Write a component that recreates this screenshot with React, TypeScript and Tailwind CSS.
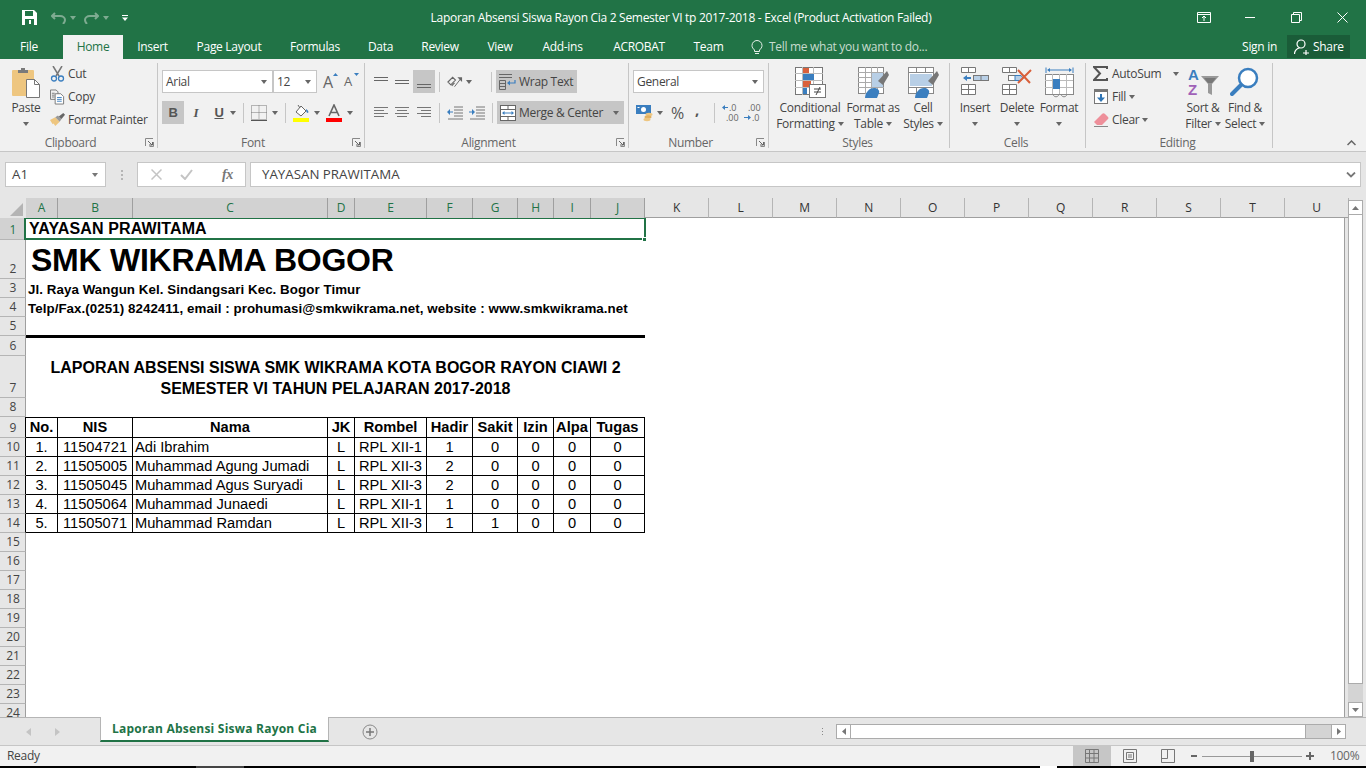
import type { ReactNode } from 'react'

const ui = "[font-family:'Open_Sans',sans-serif]"

function Caret({ className = 'border-t-[#666]' }: { className?: string }) {
  return <span className={`inline-block h-0 w-0 border-x-[3.5px] border-t-[4px] border-x-transparent ${className}`} />
}

function Launcher() {
  return (
    <svg width="9" height="9" viewBox="0 0 9 9" className="shrink-0">
      <path d="M0.5 8V0.5H8M8.5 4v4.5H4.5" fill="none" stroke="#888" />
      <path d="M3 3l4 4M4 7h3.5V4" fill="none" stroke="#666" />
    </svg>
  )
}

function Group({ width, label, launcher = false, children }: { width: string; label: string; launcher?: boolean; children: ReactNode }) {
  return (
    <div className={`${width} flex h-[85px] shrink-0 flex-col border-r border-[#c6c6c6]`}>
      <div className="h-[74px] shrink-0">{children}</div>
      <div className="flex h-[11px] items-center pr-[3px] text-[#666]">
        <span className={`flex-1 text-center leading-[16px] ${launcher ? 'pr-[4px]' : ''}`}>{label}</span>
        {launcher && <Launcher />}
      </div>
    </div>
  )
}

function LargeButton({ width, icon, line1, line2 }: { width: string; icon: ReactNode; line1: string; line2?: string }) {
  return (
    <div className={`${width} flex shrink-0 flex-col items-center pt-[4px] text-[#444]`}>
      <div className="h-[33px]">{icon}</div>
      <div className="whitespace-nowrap leading-[16px]">{line1}</div>
      <div className="flex h-[16px] items-center gap-[3px] whitespace-nowrap leading-[16px]">
        {line2}
        <Caret />
      </div>
    </div>
  )
}

function SmallRow({ icon, label, caret = false, gap = 'w-[15px]' }: { icon: ReactNode; label: string; caret?: boolean; gap?: string }) {
  return (
    <div className="flex h-[23px] items-center text-[#444]">
      <div className={`${gap} flex shrink-0 justify-center`}>{icon}</div>
      <span className="ml-[3px] whitespace-nowrap">{label}</span>
      {caret && <span className="ml-[3px] flex"><Caret /></span>}
    </div>
  )
}

function Lines({ rows }: { rows: [number, number][] }) {
  return (
    <svg width="16" height="16" viewBox="0 0 16 16">
      {rows.map(([x, w], i) => (
        <rect key={i} x={x} y={i * 3 + 2} width={w} height="1" fill="#777" />
      ))}
    </svg>
  )
}

function Valign({ pos }: { pos: 'top' | 'mid' | 'bot' }) {
  const y = pos === 'top' ? 3 : pos === 'mid' ? 6 : 10
  return (
    <svg width="16" height="16" viewBox="0 0 16 16">
      <rect x="1" y={y} width="14" height="1" fill="#666" />
      <rect x="1" y={y + 3} width="14" height="1" fill="#666" />
      {pos === 'bot' && <rect x="1" y={y + 6} width="14" height="1" fill="#666" />}
    </svg>
  )
}

function Indent({ flip = false }: { flip?: boolean }) {
  return (
    <svg width="16" height="14" viewBox="0 0 16 14">
      <path d="M7 1h9M7 4h9M7 7h9M7 10h9M1 13h15" stroke="#777" fill="none" />
      {flip ? <path d="M0 5.5h3V3l3 3-3 3V6.5H0z" fill="#3a7ebf" /> : <path d="M6 5.5H3V3L0 6l3 3V6.5h3z" fill="#3a7ebf" />}
    </svg>
  )
}

const PasteIcon = (
  <svg width="30" height="31" viewBox="0 0 30 31">
    <rect x="1" y="3" width="22" height="26" rx="1" fill="#eec680" />
    <path d="M7 6V3h3V1h4v2h3v3z" fill="#7a7a7a" />
    <path d="M15.5 12.5h8l5 5v13h-13z" fill="#fff" stroke="#777" />
    <path d="M23.5 12.5v5h5" fill="none" stroke="#777" />
  </svg>
)

const CutIcon = (
  <svg width="15" height="16" viewBox="0 0 15 16">
    <path d="M3 0l6 10M12 0L6 10" stroke="#777" strokeWidth="1.5" fill="none" />
    <circle cx="4" cy="12.5" r="2.5" fill="none" stroke="#3a7ebf" strokeWidth="1.3" />
    <circle cx="11" cy="12.5" r="2.5" fill="none" stroke="#3a7ebf" strokeWidth="1.3" />
  </svg>
)

const CopyIcon = (
  <svg width="16" height="16" viewBox="0 0 16 16">
    <path d="M.5.5h6l2 2v3M.5.5v10h5" fill="none" stroke="#777" />
    <path d="M2 4h3M2 6h3M2 8h3" stroke="#777" />
    <path d="M5.5 4.5h6l3 3v8h-9z" fill="#fff" stroke="#777" />
    <path d="M7.5 8.5h5M7.5 10.5h5M7.5 12.5h5" stroke="#3a7ebf" />
  </svg>
)

const PainterIcon = (
  <svg width="17" height="15" viewBox="0 0 17 15">
    <path d="M0 8l6-3 5 5-5 5-2-3-1 1z" fill="#eec680" />
    <path d="M6 5l3-2 4 4-2 3z" fill="#999" />
    <path d="M10 4l5-4 2 2-4 5z" fill="#666" />
  </svg>
)

function GrowA({ up }: { up: boolean }) {
  return (
    <div className="relative flex h-[23px] w-[15px] items-center">
      <span className={`leading-none text-[#666] ${up ? 'text-[16px]' : 'text-[13px]'}`}>A</span>
      <svg width="5" height="3" viewBox="0 0 5 3" className="absolute right-0 top-[3px]">
        <path d={up ? 'M0 3l2.5-3 2.5 3z' : 'M0 0l2.5 3 2.5-3z'} fill="#3a7ebf" />
      </svg>
    </div>
  )
}

const BorderIcon = (
  <svg width="16" height="16" viewBox="0 0 16 16">
    <path d="M.5.5h15v14H.5zM8 .5v14M.5 7.5h15" fill="none" stroke="#777" strokeDasharray="1 1" />
    <path d="M0 15.5h16" stroke="#555" />
  </svg>
)

const FillIcon = (
  <svg width="16" height="18" viewBox="0 0 16 18">
    <path d="M3 8l5-6 5 5-5 5z" fill="#fff" stroke="#666" />
    <path d="M5 1l2 3" stroke="#666" />
    <path d="M13 5c2 1 3 3 2 4-1 0-2-1-2-4z" fill="#3a7ebf" />
    <rect y="14" width="16" height="4" fill="#ffff00" />
  </svg>
)

const FontColorIcon = (
  <svg width="16" height="18" viewBox="0 0 16 18">
    <path d="M3 12L8 1l5 11M5 8.5h6" fill="none" stroke="#666" strokeWidth="1.6" />
    <rect y="14" width="16" height="4" fill="#ff0000" />
  </svg>
)

const OrientIcon = (
  <svg width="17" height="14" viewBox="0 0 17 14">
    <path d="M1 7l5-5 3 3-5 5zM5 11l3-3" fill="none" stroke="#666" strokeWidth="1.2" />
    <path d="M8 12L15 3" stroke="#666" />
    <path d="M11 2h5v5z" fill="#666" />
  </svg>
)

const WrapIcon = (
  <svg width="17" height="16" viewBox="0 0 17 16">
    <path d="M0 .5h13M0 3.5h13M.5 6.5h6v9h-6zM.5 9.5h6M.5 12.5h6" stroke="#666" fill="none" />
    <path d="M16 6v3h-6" stroke="#3a7ebf" fill="none" strokeWidth="1.2" />
    <path d="M8 9l3-2.5v5z" fill="#3a7ebf" />
  </svg>
)

const MergeIcon = (
  <svg width="16" height="16" viewBox="0 0 16 16">
    <rect x=".5" y=".5" width="15" height="15" fill="#fff" stroke="#666" />
    <path d="M.5 4.5h15M.5 11.5h15M8 .5v4M8 11.5v4" stroke="#666" />
    <path d="M3 8h10" stroke="#3a7ebf" />
    <path d="M2 8l2.5-2v4zM14 8l-2.5-2v4z" fill="#3a7ebf" />
  </svg>
)

const CurrencyIcon = (
  <svg width="17" height="18" viewBox="0 0 17 18">
    <rect y="1" width="15" height="9" fill="#3a7ebf" />
    <circle cx="7.5" cy="5.5" r="2.5" fill="#fff" />
    <rect x="1.5" y="3" width="2" height="1" fill="#fff" />
    <ellipse cx="13" cy="10.5" rx="3.5" ry="1.7" fill="#eec680" />
    <ellipse cx="12" cy="13" rx="3.5" ry="1.7" fill="#e0b060" />
    <ellipse cx="11" cy="15.5" rx="3.5" ry="1.7" fill="#eec680" />
  </svg>
)

function Decimal({ more }: { more: boolean }) {
  return (
    <div className="flex h-[23px] w-[16px] flex-col justify-center text-[9px] leading-[10px] tracking-normal text-[#666]">
      {more ? (
        <>
          <div className="flex items-center"><svg width="6" height="5" viewBox="0 0 6 5"><path d="M0 2.5L3 0v2h3v1H3v2z" fill="#3a7ebf" /></svg><span className="ml-px">.0</span></div>
          <div className="pl-[4px]">.00</div>
        </>
      ) : (
        <>
          <div className="pl-[4px]">.00</div>
          <div className="flex items-center"><svg width="7" height="5" viewBox="0 0 7 5"><path d="M7 2.5L4 0v2H0v1h4v2z" fill="#3a7ebf" /></svg><span className="ml-px">.0</span></div>
        </>
      )}
    </div>
  )
}

const CondIcon = (
  <svg width="31" height="31" viewBox="0 0 31 31">
    <rect x=".5" y=".5" width="27" height="27" fill="#fff" stroke="#777" />
    <path d="M7.5 0v28M18.5 0v28M0 6.5h28M0 13.5h28M0 20.5h28" stroke="#bbb" />
    <rect x="8" y="1" width="6" height="5" fill="#d9603b" />
    <rect x="8" y="7" width="11" height="6" fill="#3a7ebf" />
    <rect x="8" y="14" width="8" height="6" fill="#d9603b" />
    <rect x="8" y="21" width="4" height="6" fill="#3a7ebf" />
    <rect x="14.5" y="17.5" width="16" height="13" fill="#fff" stroke="#777" />
    <path d="M19 22h7M19 25h7M25 20l-4 8" stroke="#444" fill="none" />
  </svg>
)

function TableBrush({ small = false }: { small?: boolean }) {
  return (
    <svg width="31" height="31" viewBox="0 0 31 31">
      <rect x=".5" y=".5" width="25" height="26" fill="#fff" stroke="#888" />
      {small ? (
        <path d="M0 5.5h26M0 20.5h26M8.5 0v6M17.5 0v6M8.5 20v7M17.5 20v7M.5 5.5v15" stroke="#888" fill="none" />
      ) : (
        <path d="M0 5.5h26M0 10.5h26M0 15.5h26M0 20.5h26M7.5 0v27M13.5 0v27M19.5 0v27" stroke="#aaa" />
      )}
      <rect x={small ? 2 : 14} y={small ? 7 : 6} width={small ? 22 : 11} height={small ? 12 : 14} fill="#b8cfe6" />
      <path d="M20 14l5 4 6-10-2-4z" fill="#777" />
      <path d="M7 31c0-5 4-10 9-10 3 0 6 2 5 5l-2 5z" fill="#3a7ebf" />
    </svg>
  )
}

const InsertIcon = (
  <svg width="28" height="28" viewBox="0 0 28 28">
    <path d="M.5.5h14v5H.5zM7.5.5v5M.5 17.5h14v10H.5zM.5 22.5h14M7.5 17.5v10" fill="#fff" stroke="#777" />
    <rect x="12.5" y="8.5" width="15" height="5" fill="#b8cfe6" stroke="#777" />
    <path d="M20 8.5v5" stroke="#777" />
    <path d="M2 11l4-3v2h4v2H6v2z" fill="#3a7ebf" />
  </svg>
)

const DeleteIcon = (
  <svg width="30" height="28" viewBox="0 0 30 28">
    <path d="M.5.5h14v5H.5zM7.5.5v5M.5 17.5h14v10H.5zM.5 22.5h14M7.5 17.5v10" fill="#fff" stroke="#777" />
    <rect x="6.5" y="8.5" width="8" height="5" fill="#fff" stroke="#777" />
    <path d="M13 8.5h6l2 2.5-2 2.5h-6z" fill="#b8cfe6" stroke="#3a7ebf" />
    <path d="M16 3l12 13M29 3L16 16" stroke="#d9603b" strokeWidth="2" fill="none" />
  </svg>
)

const FormatIcon = (
  <svg width="29" height="31" viewBox="0 0 29 31">
    <path d="M1 .5V6M28 .5V6M3 3h23" stroke="#3a7ebf" fill="none" />
    <path d="M2 3l3-2v4zM27 3l-3-2v4z" fill="#3a7ebf" />
    <rect x=".5" y="7.5" width="28" height="20" fill="#fff" stroke="#888" />
    <path d="M7.5 7v20M14.5 7v20M21.5 7v20M0 13.5h28M0 20.5h28" stroke="#bbb" />
    <rect x="8" y="12" width="7" height="10" fill="#3a7ebf" />
    <path d="M8 27.5c1 3 5 3 6 0M16 27.5c1 3 5 3 6 0" fill="none" stroke="#888" />
  </svg>
)

const SigmaIcon = (
  <svg width="15" height="15" viewBox="0 0 15 15">
    <path d="M14 3V1H1l6 6.5L1 14h13v-2" fill="none" stroke="#555" strokeWidth="2" />
  </svg>
)

const FillDownIcon = (
  <svg width="14" height="15" viewBox="0 0 14 15">
    <rect x=".5" y=".5" width="13" height="14" fill="#fff" stroke="#777" />
    <rect x="0" y="0" width="14" height="3" fill="#777" />
    <path d="M7 5v5" stroke="#2f75b5" strokeWidth="2" />
    <path d="M3 8.5h8L7 13z" fill="#2f75b5" />
  </svg>
)

const EraserIcon = (
  <svg width="15" height="14" viewBox="0 0 15 14">
    <path d="M0 9L8 1c1-1 2-1 3 0l3 3c1 1 0 2 0 2l-6 6H3z" fill="#ee8f9a" />
    <path d="M0 13.5h14" stroke="#888" />
  </svg>
)

const SortIcon = (
  <svg width="33" height="31" viewBox="0 0 33 31">
    <text x="1" y="13" fill="#3a7ebf" fontSize="15" fontFamily="Liberation Sans" fontWeight="bold">A</text>
    <text x="1" y="28" fill="#a061b8" fontSize="15" fontFamily="Liberation Sans" fontWeight="bold">Z</text>
    <path d="M14 9h18l-7 8v11l-4-2v-9z" fill="#999" />
    <path d="M17 11h12l-4 5h-4z" fill="#777" />
  </svg>
)

const FindIcon = (
  <svg width="30" height="31" viewBox="0 0 30 31">
    <circle cx="18" cy="11" r="9" fill="#fff" stroke="#3a7ebf" strokeWidth="2.5" />
    <path d="M2 27l9-9" stroke="#3a7ebf" strokeWidth="4" strokeLinecap="round" />
  </svg>
)

function Combo({ width, text }: { width: string; text: string }) {
  return (
    <div className={`${width} flex h-[23px] shrink-0 items-center justify-between border border-[#c6c6c6] bg-white pl-[3px] pr-[5px] text-[#444]`}>
      <span>{text}</span>
      <Caret />
    </div>
  )
}

function IconCell({ width, active = false, children }: { width: string; active?: boolean; children: ReactNode }) {
  return <div className={`${width} flex h-[23px] shrink-0 items-center justify-center ${active ? 'bg-[#c6c6c6]' : ''}`}>{children}</div>
}

const Sep = ({ ml }: { ml: string }) => <div className={`${ml} h-[20px] w-px shrink-0 bg-[#c6c6c6]`} />

function TitleBar() {
  return (
    <div className="flex h-[35px] shrink-0 items-center bg-[#217346] text-white">
      <svg width="15" height="15" viewBox="0 0 15 15" className="ml-[22px]">
        <path d="M0 0h12l3 3v12H0z" fill="#fff" />
        <rect x="3" y="1" width="8" height="5" fill="#217346" />
        <rect x="3" y="9" width="9" height="6" fill="#217346" />
        <rect x="7" y="10" width="2" height="4" fill="#fff" />
      </svg>
      <svg width="15" height="12" viewBox="0 0 15 12" className="ml-[14px]">
        <path d="M4 1L1 4l3 3M1 4h8c3 0 5 2 5 4s-1 3-2 4" fill="none" stroke="#7eab91" strokeWidth="2" />
      </svg>
      <span className="ml-[4px] flex"><Caret className="border-t-[#7eab91]" /></span>
      <svg width="15" height="12" viewBox="0 0 15 12" className="ml-[8px]">
        <path d="M11 1l3 3-3 3M14 4H6C3 4 1 6 1 8s1 3 2 4" fill="none" stroke="#7eab91" strokeWidth="2" />
      </svg>
      <span className="ml-[4px] flex"><Caret className="border-t-[#7eab91]" /></span>
      <svg width="7" height="6" viewBox="0 0 7 6" className="ml-[13px]">
        <path d="M0 .5h6" stroke="#fff" />
        <path d="M0 2.5h6L3 6z" fill="#fff" />
      </svg>
      <div className="flex-1 whitespace-nowrap pl-[36px] text-center leading-[35px]">Laporan Absensi Siswa Rayon Cia 2 Semester VI tp 2017-2018 - Excel (Product Activation Failed)</div>
      <svg width="14" height="11" viewBox="0 0 14 11">
        <path d="M.5.5h13v10H.5zM.5 2.5h13" fill="none" stroke="#fff" />
        <path d="M7 9V4M5 6l2-2 2 2" fill="none" stroke="#fff" />
      </svg>
      <div className="ml-[34px] h-px w-[10px] bg-white" />
      <svg width="11" height="11" viewBox="0 0 11 11" className="ml-[36px]">
        <path d="M2.5 2.5V.5h8v8h-2M.5 2.5h8v8h-8z" fill="none" stroke="#fff" />
      </svg>
      <svg width="11" height="11" viewBox="0 0 11 11" className="ml-[35px] mr-[18px]">
        <path d="M.5.5l10 10M10.5.5l-10 10" stroke="#fff" />
      </svg>
    </div>
  )
}

const tabs: [string, string][] = [
  ['Insert', 'w-[59px]'],
  ['Page Layout', 'w-[94px]'],
  ['Formulas', 'w-[78px]'],
  ['Data', 'w-[53px]'],
  ['Review', 'w-[66px]'],
  ['View', 'w-[54px]'],
  ['Add-ins', 'w-[71px]'],
  ['ACROBAT', 'w-[82px]'],
  ['Team', 'w-[57px]'],
]

function TabBar() {
  return (
    <div className="flex h-[24px] shrink-0 items-stretch bg-[#217346] text-white">
      <div className="flex w-[58px] items-center justify-center">File</div>
      <div className="ml-[5px] flex w-[60px] items-center justify-center bg-[#f1f1f1] text-[#217346]">Home</div>
      {tabs.map(([name, w]) => (
        <div key={name} className={`${w} flex items-center justify-center whitespace-nowrap`}>{name}</div>
      ))}
      <div className="ml-[14px] flex items-center text-[#c8dccf]">
        <svg width="12" height="15" viewBox="0 0 12 15">
          <path d="M3.5 10C2 8.5 1 7.5 1 5.5a5 5 0 0 1 10 0c0 2-1 3-2.5 4.5v1.5h-5zM4 13.5h4" fill="none" stroke="#e6efe9" />
        </svg>
        <span className="ml-[6px] whitespace-nowrap">Tell me what you want to do...</span>
      </div>
      <div className="ml-auto flex items-center">Sign in</div>
      <div className="ml-[10px] mr-[16px] flex h-[23px] w-[63px] items-center bg-[#1a5c38] pl-[7px]">
        <svg width="16" height="16" viewBox="0 0 16 16">
          <circle cx="7" cy="5" r="4" fill="none" stroke="#fff" strokeWidth="1.2" />
          <path d="M.5 15c0-3 2.5-6 5-6M9 14h6M12 11v6" fill="none" stroke="#fff" strokeWidth="1.2" />
        </svg>
        <span className="ml-[3px]">Share</span>
      </div>
    </div>
  )
}

function Ribbon() {
  return (
    <div className="flex h-[93px] shrink-0 border-b border-[#c6c6c6] bg-[#f1f1f1] pt-[4px]">
      <Group width="w-[158px]" label="Clipboard" launcher>
        <div className="flex">
          <div className="ml-[10px]">
            <LargeButton width="w-[32px]" icon={PasteIcon} line1="Paste" />
          </div>
          <div className="-mt-px ml-[8px]">
            <SmallRow icon={CutIcon} label="Cut" />
            <SmallRow icon={CopyIcon} label="Copy" />
            <SmallRow icon={PainterIcon} label="Format Painter" />
          </div>
        </div>
      </Group>

      <Group width="w-[207px]" label="Font" launcher>
        <div className="flex h-[30px] items-end pl-[4px]">
          <Combo width="w-[111px]" text="Arial" />
          <Combo width="w-[44px]" text="12" />
          <div className="ml-[6px]"><GrowA up /></div>
          <div className="ml-[6px]"><GrowA up={false} /></div>
        </div>
        <div className="mt-[8px] flex items-center pl-[4px]">
          <IconCell width="w-[22px]" active><span className="text-[13px] font-bold text-[#555] [font-family:'Liberation_Sans',sans-serif]">B</span></IconCell>
          <IconCell width="w-[24px]"><span className="text-[13px] font-bold italic text-[#555] [font-family:'Liberation_Serif',serif]">I</span></IconCell>
          <IconCell width="w-[22px]"><span className="text-[13px] font-bold text-[#555] underline [font-family:'Liberation_Sans',sans-serif]">U</span></IconCell>
          <span className="flex"><Caret /></span>
          <Sep ml="ml-[7px]" />
          <div className="ml-[7px] flex">{BorderIcon}</div>
          <span className="ml-[5px] flex"><Caret /></span>
          <Sep ml="ml-[7px]" />
          <div className="ml-[7px] flex">{FillIcon}</div>
          <span className="ml-[5px] flex"><Caret /></span>
          <div className="ml-[6px] flex">{FontColorIcon}</div>
          <span className="ml-[5px] flex"><Caret /></span>
        </div>
      </Group>

      <Group width="w-[264px]" label="Alignment" launcher>
        <div className="flex h-[30px] items-end pl-[5px]">
          <IconCell width="w-[21px]"><Valign pos="top" /></IconCell>
          <IconCell width="w-[22px]"><Valign pos="mid" /></IconCell>
          <IconCell width="w-[22px]" active><Valign pos="bot" /></IconCell>
          <div className="flex h-[23px] items-center">
            <Sep ml="ml-[4px]" />
            <div className="ml-[7px] flex w-[16px]">{OrientIcon}</div>
            <span className="ml-[3px] flex"><Caret /></span>
            <Sep ml="ml-[19px]" />
          </div>
          <div className="ml-[4px] flex h-[23px] w-[81px] items-center bg-[#c6c6c6] pl-[3px] text-[#444]">
            {WrapIcon}
            <span className="ml-[3px] whitespace-nowrap">Wrap Text</span>
          </div>
        </div>
        <div className="mt-[8px] flex items-center pl-[5px]">
          <IconCell width="w-[21px]"><Lines rows={[[1, 14], [1, 10], [1, 14], [1, 10]]} /></IconCell>
          <IconCell width="w-[22px]"><Lines rows={[[1, 14], [3, 10], [1, 14], [3, 10]]} /></IconCell>
          <IconCell width="w-[22px]"><Lines rows={[[1, 14], [5, 10], [1, 14], [5, 10]]} /></IconCell>
          <Sep ml="ml-[4px]" />
          <div className="ml-[7px] flex"><Indent /></div>
          <div className="ml-[6px] flex"><Indent flip /></div>
          <Sep ml="ml-[7px]" />
          <div className="ml-[4px] flex h-[23px] w-[127px] items-center bg-[#c6c6c6] pl-[3px] pr-[5px] text-[#444]">
            {MergeIcon}
            <span className="ml-[3px] flex-1 whitespace-nowrap">Merge &amp; Center</span>
            <Caret />
          </div>
        </div>
      </Group>

      <Group width="w-[140px]" label="Number" launcher>
        <div className="flex h-[30px] items-end pl-[4px]">
          <Combo width="w-[131px]" text="General" />
        </div>
        <div className="mt-[8px] flex h-[23px] items-center pl-[7px] text-[#555]">
          <div className="flex w-[17px]">{CurrencyIcon}</div>
          <span className="ml-[4px] flex"><Caret /></span>
          <span className="ml-[8px] w-[14px] text-[16px] leading-none">%</span>
          <span className="ml-[10px] w-[4px] -translate-y-[3px] text-[15px] font-bold leading-none">,</span>
          <Sep ml="ml-[15px]" />
          <div className="ml-[7px]"><Decimal more /></div>
          <div className="ml-[6px]"><Decimal more={false} /></div>
        </div>
      </Group>

      <Group width="w-[181px]" label="Styles">
        <div className="flex pl-px">
          <LargeButton width="w-[80px]" icon={CondIcon} line1="Conditional" line2="Formatting" />
          <LargeButton width="w-[46px]" icon={<TableBrush />} line1="Format as" line2="Table" />
          <LargeButton width="w-[54px]" icon={<TableBrush small />} line1="Cell" line2="Styles" />
        </div>
      </Group>

      <Group width="w-[136px]" label="Cells">
        <div className="flex pl-[4px]">
          <LargeButton width="w-[42px]" icon={InsertIcon} line1="Insert" />
          <LargeButton width="w-[42px]" icon={DeleteIcon} line1="Delete" />
          <LargeButton width="w-[42px]" icon={FormatIcon} line1="Format" />
        </div>
      </Group>

      <Group width="w-[187px]" label="Editing">
        <div className="flex pl-[7px]">
          <div className="-mt-px w-[89px]">
            <div className="flex h-[23px] items-center text-[#444]">
              {SigmaIcon}
              <span className="ml-[4px]">AutoSum</span>
              <span className="ml-[12px] flex"><Caret /></span>
            </div>
            <SmallRow icon={FillDownIcon} label="Fill" caret gap="w-[16px]" />
            <SmallRow icon={EraserIcon} label="Clear" caret gap="w-[16px]" />
          </div>
          <LargeButton width="w-[42px]" icon={SortIcon} line1="Sort &" line2="Filter" />
          <LargeButton width="w-[42px]" icon={FindIcon} line1="Find &" line2="Select" />
        </div>
      </Group>

      <div className="flex h-[85px] flex-1 items-end justify-end pb-[2px] pr-[10px]">
        <svg width="9" height="6" viewBox="0 0 9 6">
          <path d="M.5 5l4-4 4 4" fill="none" stroke="#666" strokeWidth="1.5" />
        </svg>
      </div>
    </div>
  )
}

function FormulaBar() {
  return (
    <div className="flex h-[45px] shrink-0 items-start bg-[#e6e6e6] pt-[10px]">
      <div className="ml-[5px] flex h-[25px] w-[101px] items-center justify-between border border-[#c6c6c6] bg-white pl-[6px] pr-[7px] pt-px text-[13.3px] tracking-normal text-[#444]">
        <span>A1</span>
        <Caret className="border-t-[#777]" />
      </div>
      <div className="ml-[15px] flex h-[25px] flex-col justify-center gap-[2px]">
        <div className="h-[2px] w-[2px] bg-[#b5b5b5]" />
        <div className="h-[2px] w-[2px] bg-[#b5b5b5]" />
        <div className="h-[2px] w-[2px] bg-[#b5b5b5]" />
      </div>
      <div className="ml-[14px] flex h-[25px] w-[109px] items-center border border-[#c6c6c6] bg-white text-[#bbb]">
        <svg width="11" height="11" viewBox="0 0 11 11" className="ml-[13px]">
          <path d="M.5.5l10 10M10.5.5l-10 10" stroke="#c4c4c4" strokeWidth="1.5" />
        </svg>
        <svg width="13" height="11" viewBox="0 0 13 11" className="ml-[18px]">
          <path d="M1 6l4 4 7-9" fill="none" stroke="#c4c4c4" strokeWidth="2" />
        </svg>
        <span className="ml-[29px] text-[14px] font-bold italic text-[#777] [font-family:'Liberation_Serif',serif]">fx</span>
      </div>
      <div className="ml-[4px] mr-[5px] flex h-[25px] flex-1 items-center justify-between border border-[#c6c6c6] bg-white pl-[11px] pr-[4px] pt-px text-[13.3px] tracking-normal text-[#444]">
        <span>YAYASAN PRAWITAMA</span>
        <svg width="10" height="6" viewBox="0 0 10 6">
          <path d="M1 .5l4 4 4-4" fill="none" stroke="#777" strokeWidth="1.8" />
        </svg>
      </div>
    </div>
  )
}

const selectedCols: [string, string][] = [
  ['A', 'w-[32px]'],
  ['B', 'w-[75px]'],
  ['C', 'w-[195px]'],
  ['D', 'w-[27px]'],
  ['E', 'w-[72px]'],
  ['F', 'w-[46px]'],
  ['G', 'w-[45px]'],
  ['H', 'w-[36px]'],
  ['I', 'w-[37px]'],
  ['J', 'w-[54px]'],
]
const otherCols = ['K', 'L', 'M', 'N', 'O', 'P', 'Q', 'R', 'S', 'T', 'U']

function ColumnHeader() {
  return (
    <div className="flex h-[21px] shrink-0 items-stretch pt-px">
      <div className="flex w-[26px] shrink-0 items-end justify-end pb-[2px] pr-[3px]">
        <svg width="13" height="13" viewBox="0 0 13 13"><path d="M13 0v13H0z" fill="#b4b4b4" /></svg>
      </div>
      {selectedCols.map(([c, w]) => (
        <div key={c} className={`${w} flex shrink-0 items-center justify-center border-r border-[#9f9f9f] bg-[#d2d2d2] text-[#217346]`}>{c}</div>
      ))}
      {otherCols.map((c) => (
        <div key={c} className="flex w-[64px] shrink-0 items-center justify-center border-b border-r border-[#b5b5b5] border-b-[#9f9f9f] text-[#333]">{c}</div>
      ))}
    </div>
  )
}

function RowHead({ n, height, active = false, black = false }: { n: number; height: string; active?: boolean; black?: boolean }) {
  return (
    <div className={`${height} flex items-end justify-center border-b border-r border-b-[#b5b5b5] pl-px leading-[18px] tracking-normal ${black ? 'border-r-black' : 'border-r-[#9f9f9f]'} ${active ? 'bg-[#d2d2d2] text-[#217346]' : 'bg-[#e6e6e6] text-[#444]'}`}>
      {n}
    </div>
  )
}

const cell = 'flex h-[19px] items-center justify-center border-b border-r border-black text-[14.67px] leading-none'
const students = [
  ['1.', '11504721', 'Adi Ibrahim', 'L', 'RPL XII-1', '1', '0'],
  ['2.', '11505005', 'Muhammad Agung Jumadi', 'L', 'RPL XII-3', '2', '0'],
  ['3.', '11505045', 'Muhammad Agus Suryadi', 'L', 'RPL XII-3', '2', '0'],
  ['4.', '11505064', 'Muhammad Junaedi', 'L', 'RPL XII-1', '1', '0'],
  ['5.', '11505071', 'Muhammad Ramdan', 'L', 'RPL XII-3', '1', '1'],
]
const headers = ['No.', 'NIS', 'Nama', 'JK', 'Rombel', 'Hadir', 'Sakit', 'Izin', 'Alpa', 'Tugas']

function SheetGrid() {
  return (
    <div className="grid w-[645px] grid-cols-[26px_32px_75px_195px_27px_72px_46px_45px_36px_37px_54px] text-[#000] tracking-normal [font-family:'Liberation_Sans',sans-serif]">
      <div className={ui}><RowHead n={1} height="h-[22px]" active /></div>
      <div className="relative col-span-10 flex h-[22px] items-center whitespace-nowrap pl-[3px] text-[16px] font-bold tracking-[0.12px]">
        YAYASAN PRAWITAMA
        <div className="absolute bottom-0 -left-[2px] -right-px -top-px z-10 border-2 border-[#217346]" />
        <div className="absolute -bottom-[2px] -right-[2px] z-10 h-[5px] w-[5px] border border-white bg-[#217346]" />
      </div>

      <div className={ui}><RowHead n={2} height="h-[39px]" /></div>
      <div className="col-span-10 flex h-[39px] items-center whitespace-nowrap pl-[5px] text-[32px] font-bold leading-none tracking-[-0.25px]">SMK WIKRAMA BOGOR</div>

      <div className={ui}><RowHead n={3} height="h-[19px]" /></div>
      <div className="col-span-10 flex h-[19px] items-center whitespace-nowrap pl-[2px] pt-[3px] text-[13.33px] font-bold tracking-[0.06px]">Jl. Raya Wangun Kel. Sindangsari Kec. Bogor Timur</div>

      <div className={ui}><RowHead n={4} height="h-[19px]" /></div>
      <div className="col-span-10 flex h-[19px] items-center whitespace-nowrap pl-[2px] pt-[3px] text-[13.33px] font-bold tracking-[0.06px]">Telp/Fax.(0251) 8242411, email : prohumasi@smkwikrama.net, website : www.smkwikrama.net</div>

      <div className={ui}><RowHead n={5} height="h-[19px]" /></div>
      <div className="col-span-10 h-[19px] border-b border-black" />

      <div className={ui}><RowHead n={6} height="h-[20px]" /></div>
      <div className="col-span-10 row-span-2 flex flex-col justify-end border-t-2 border-black text-center text-[16px] font-bold leading-[21px]">
        <div className="translate-y-px">LAPORAN ABSENSI SISWA SMK WIKRAMA KOTA BOGOR RAYON CIAWI 2</div>
        <div className="translate-y-px">SEMESTER VI TAHUN PELAJARAN 2017-2018</div>
      </div>

      <div className={ui}><RowHead n={7} height="h-[42px]" /></div>

      <div className={ui}><RowHead n={8} height="h-[19px]" /></div>
      <div className="col-span-10 h-[19px]" />

      <div className={ui}><RowHead n={9} height="h-[21px]" black /></div>
      {headers.map((h) => (
        <div key={h} className={`${cell} h-[21px] whitespace-nowrap border-t font-bold`}>{h}</div>
      ))}

      {students.map((s, i) => (
        <div key={s[1]} className="contents">
          <div className={ui}><RowHead n={i + 10} height="h-[19px]" black /></div>
          <div className={cell}>{s[0]}</div>
          <div className={cell}>{s[1]}</div>
          <div className={`${cell} whitespace-nowrap pl-[2px]`}>
            <span className="w-full text-left">{s[2]}</span>
          </div>
          <div className={cell}>{s[3]}</div>
          <div className={`${cell} whitespace-nowrap`}>{s[4]}</div>
          <div className={cell}>{s[5]}</div>
          <div className={cell}>{s[6]}</div>
          <div className={cell}>0</div>
          <div className={cell}>0</div>
          <div className={cell}>0</div>
        </div>
      ))}

      {[15, 16, 17, 18, 19, 20, 21, 22, 23, 24].map((n) => (
        <div key={n} className="contents">
          <div className={ui}><RowHead n={n} height="h-[19px]" /></div>
          <div className="col-span-10" />
        </div>
      ))}
    </div>
  )
}

function VScroll() {
  return (
    <div className="flex w-[15px] shrink-0 flex-col pt-[3px]">
      <div className="flex h-[15px] items-center justify-center border border-[#ababab] bg-white">
        <svg width="7" height="4" viewBox="0 0 7 4"><path d="M0 4l3.5-4L7 4z" fill="#777" /></svg>
      </div>
      <div className="h-[468px] border-x border-[#ababab] bg-white" />
      <div className="flex-1 border-t border-[#ababab] bg-[#d4d4d4]" />
      <div className="flex h-[15px] items-center justify-center border border-[#ababab] bg-white">
        <svg width="7" height="4" viewBox="0 0 7 4"><path d="M0 0l3.5 4L7 0z" fill="#777" /></svg>
      </div>
    </div>
  )
}

function SheetArea() {
  return (
    <div className="flex h-[520px] shrink-0 bg-[#e6e6e6]">
      <div className="flex w-[1348px] shrink-0 flex-col">
        <ColumnHeader />
        <div className="mr-[3px] min-h-0 flex-1 overflow-hidden border-r border-[#9f9f9f] bg-white">
          <SheetGrid />
        </div>
      </div>
      <VScroll />
    </div>
  )
}

function SheetTabs() {
  return (
    <div className="flex h-[29px] shrink-0 items-start border-y border-[#b5b5b5] border-b-[#c6c6c6] bg-[#e6e6e6]">
      <div className="flex h-[27px] w-[100px] shrink-0 items-center pl-[26px]">
        <svg width="5" height="8" viewBox="0 0 5 8"><path d="M5 0v8L0 4z" fill="#c4c4c4" /></svg>
        <svg width="5" height="8" viewBox="0 0 5 8" className="ml-[24px]"><path d="M0 0v8l5-4z" fill="#c4c4c4" /></svg>
      </div>
      <div className="-mt-px flex h-[25px] w-[229px] shrink-0 items-center justify-center whitespace-nowrap border-x border-b-2 border-x-[#b5b5b5] border-b-[#217346] bg-white font-bold tracking-[0.22px] text-[#217346]">Laporan Absensi Siswa Rayon Cia</div>
      <div className="ml-[33px] flex h-[27px] w-[16px] shrink-0 items-center">
        <svg width="16" height="16" viewBox="0 0 16 16">
          <circle cx="8" cy="8" r="7" fill="none" stroke="#8a8a8a" />
          <path d="M4 8h8M8 4v8" stroke="#777" strokeWidth="1.5" />
        </svg>
      </div>
      <div className="ml-[444px] flex h-[27px] flex-col justify-center gap-[2px]">
        <div className="h-px w-px bg-[#888]" />
        <div className="h-px w-px bg-[#888]" />
        <div className="h-px w-px bg-[#888]" />
      </div>
      <div className="ml-[13px] mt-[6px] flex h-[15px] w-[510px] shrink-0 border border-[#ababab] bg-[#d4d4d4]">
        <div className="flex w-[14px] items-center justify-center border-r border-[#ababab] bg-white">
          <svg width="4" height="7" viewBox="0 0 4 7"><path d="M4 0v7L0 3.5z" fill="#777" /></svg>
        </div>
        <div className="w-[455px] border-r border-[#ababab] bg-white" />
        <div className="flex-1" />
        <div className="flex w-[14px] items-center justify-center border-l border-[#ababab] bg-white">
          <svg width="4" height="7" viewBox="0 0 4 7"><path d="M0 0v7l4-3.5z" fill="#777" /></svg>
        </div>
      </div>
    </div>
  )
}

function StatusBar() {
  return (
    <div className="flex h-[20px] shrink-0 items-center bg-[#f1f1f1] text-[#444]">
      <span className="ml-[7px]">Ready</span>
      <div className="ml-auto flex h-full w-[38px] items-center justify-center bg-[#c6c6c6]">
        <svg width="14" height="14" viewBox="0 0 14 14"><path d="M.5.5h13v13H.5zM.5 4.5h13M.5 9h13M4.5.5v13M9 .5v13" fill="none" stroke="#777" /></svg>
      </div>
      <svg width="14" height="14" viewBox="0 0 14 14" className="ml-[12px]"><path d="M.5.5h13v13H.5zM3.5 3.5h7v7h-7zM5 6h4M5 8h4" fill="none" stroke="#777" /></svg>
      <svg width="14" height="14" viewBox="0 0 14 14" className="ml-[24px]"><path d="M.5.5h13v13H.5zM.5 9.5h6V.5" fill="none" stroke="#777" /></svg>
      <div className="ml-[16px] h-[2px] w-[6px] bg-[#666]" />
      <div className="relative ml-[5px] h-px w-[100px] bg-[#999]">
        <div className="absolute -top-[5px] left-[48px] h-[11px] w-[4px] bg-[#666]" />
      </div>
      <svg width="8" height="8" viewBox="0 0 8 8" className="ml-[4px]"><path d="M0 4h8M4 0v8" stroke="#666" strokeWidth="2" /></svg>
      <span className="ml-[16px] mr-[9px] w-[27px] text-[#666]">100%</span>
    </div>
  )
}

function BottomEdge() {
  return (
    <div className="flex h-[2px] shrink-0 bg-black">
      <div className="ml-[196px] w-[48px] bg-[#444]" />
      <div className="ml-[796px] w-[17px] bg-white" />
    </div>
  )
}

export default function App() {
  return (
    <div className={`flex h-[768px] w-[1366px] flex-col overflow-hidden bg-[#e6e6e6] text-[12px] tracking-[-0.3px] ${ui}`}>
      <TitleBar />
      <TabBar />
      <Ribbon />
      <FormulaBar />
      <SheetArea />
      <SheetTabs />
      <StatusBar />
      <BottomEdge />
    </div>
  )
}
